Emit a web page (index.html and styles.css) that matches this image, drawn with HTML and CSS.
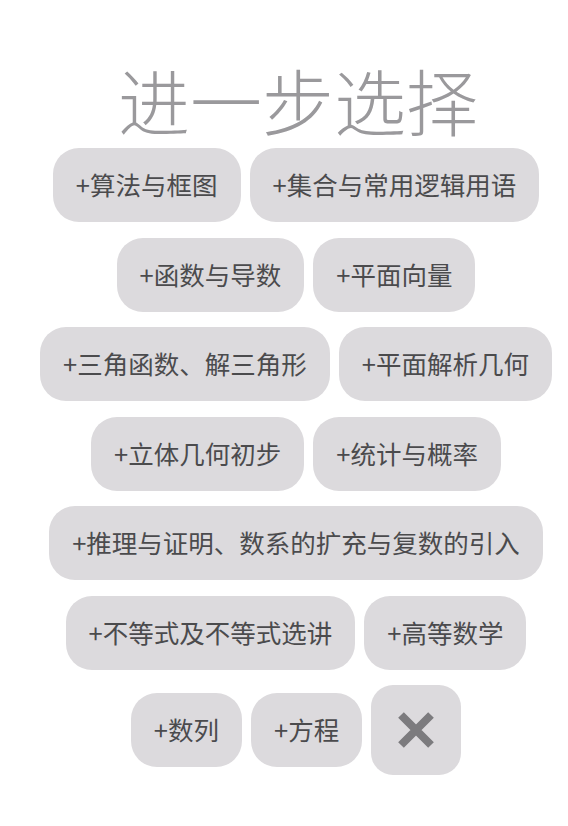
FILE: index.html
```html
<!DOCTYPE html>
<html lang="zh">
<head>
<meta charset="utf-8">
<title>进一步选择</title>
<link rel="stylesheet" href="styles.css">
</head>
<body>
<div class="page">
  <h1 class="title">进一步选择</h1>
  <div class="chips">
    <button class="chip">+算法与框图</button>
    <button class="chip">+集合与常用逻辑用语</button>
    <button class="chip">+函数与导数</button>
    <button class="chip">+平面向量</button>
    <button class="chip">+三角函数、解三角形</button>
    <button class="chip">+平面解析几何</button>
    <button class="chip">+立体几何初步</button>
    <button class="chip">+统计与概率</button>
    <button class="chip">+推理与证明、数系的扩充与复数的引入</button>
    <button class="chip">+不等式及不等式选讲</button>
    <button class="chip">+高等数学</button>
    <button class="chip">+数列</button>
    <button class="chip">+方程</button>
    <button class="close" aria-label="关闭">
      <svg width="40" height="40" viewBox="0 0 40 40"><path d="M5 5L35 35M35 5L5 35" stroke="#7c7b7e" stroke-width="8" fill="none"/></svg>
    </button>
  </div>
</div>
</body>
</html>
```

FILE: styles.css
```css
html, body {
  margin: 0;
  padding: 0;
  background: #ffffff;
}

.page {
  width: 568px;
  box-sizing: border-box;
  padding-left: 24px;
  font-family: "Noto Sans CJK SC", "Noto Sans", sans-serif;
}

.title {
  margin: 63px 0 13px 0;
  font-size: 72px;
  line-height: 72px;
  font-weight: 300;
  color: #9a999c;
  text-align: center;
  padding-left: 4px;
}

.chips {
  display: flex;
  flex-wrap: wrap;
  justify-content: center;
  align-items: center;
  column-gap: 9px;
  row-gap: 15.5px;
}

.chip {
  height: 74px;
  padding: 0 23px 3px 23px;
  border: none;
  border-radius: 26px;
  background: #dcdadd;
  color: #4b4b4d;
  font-family: "Noto Sans CJK SC", "Noto Sans", sans-serif;
  font-size: 25.5px;
  font-weight: 400;
  white-space: nowrap;
  display: flex;
  align-items: center;
}

.close {
  width: 90px;
  height: 90px;
  padding: 0;
  border: none;
  border-radius: 22px;
  background: #dcdadd;
  display: flex;
  align-items: center;
  justify-content: center;
}
```
